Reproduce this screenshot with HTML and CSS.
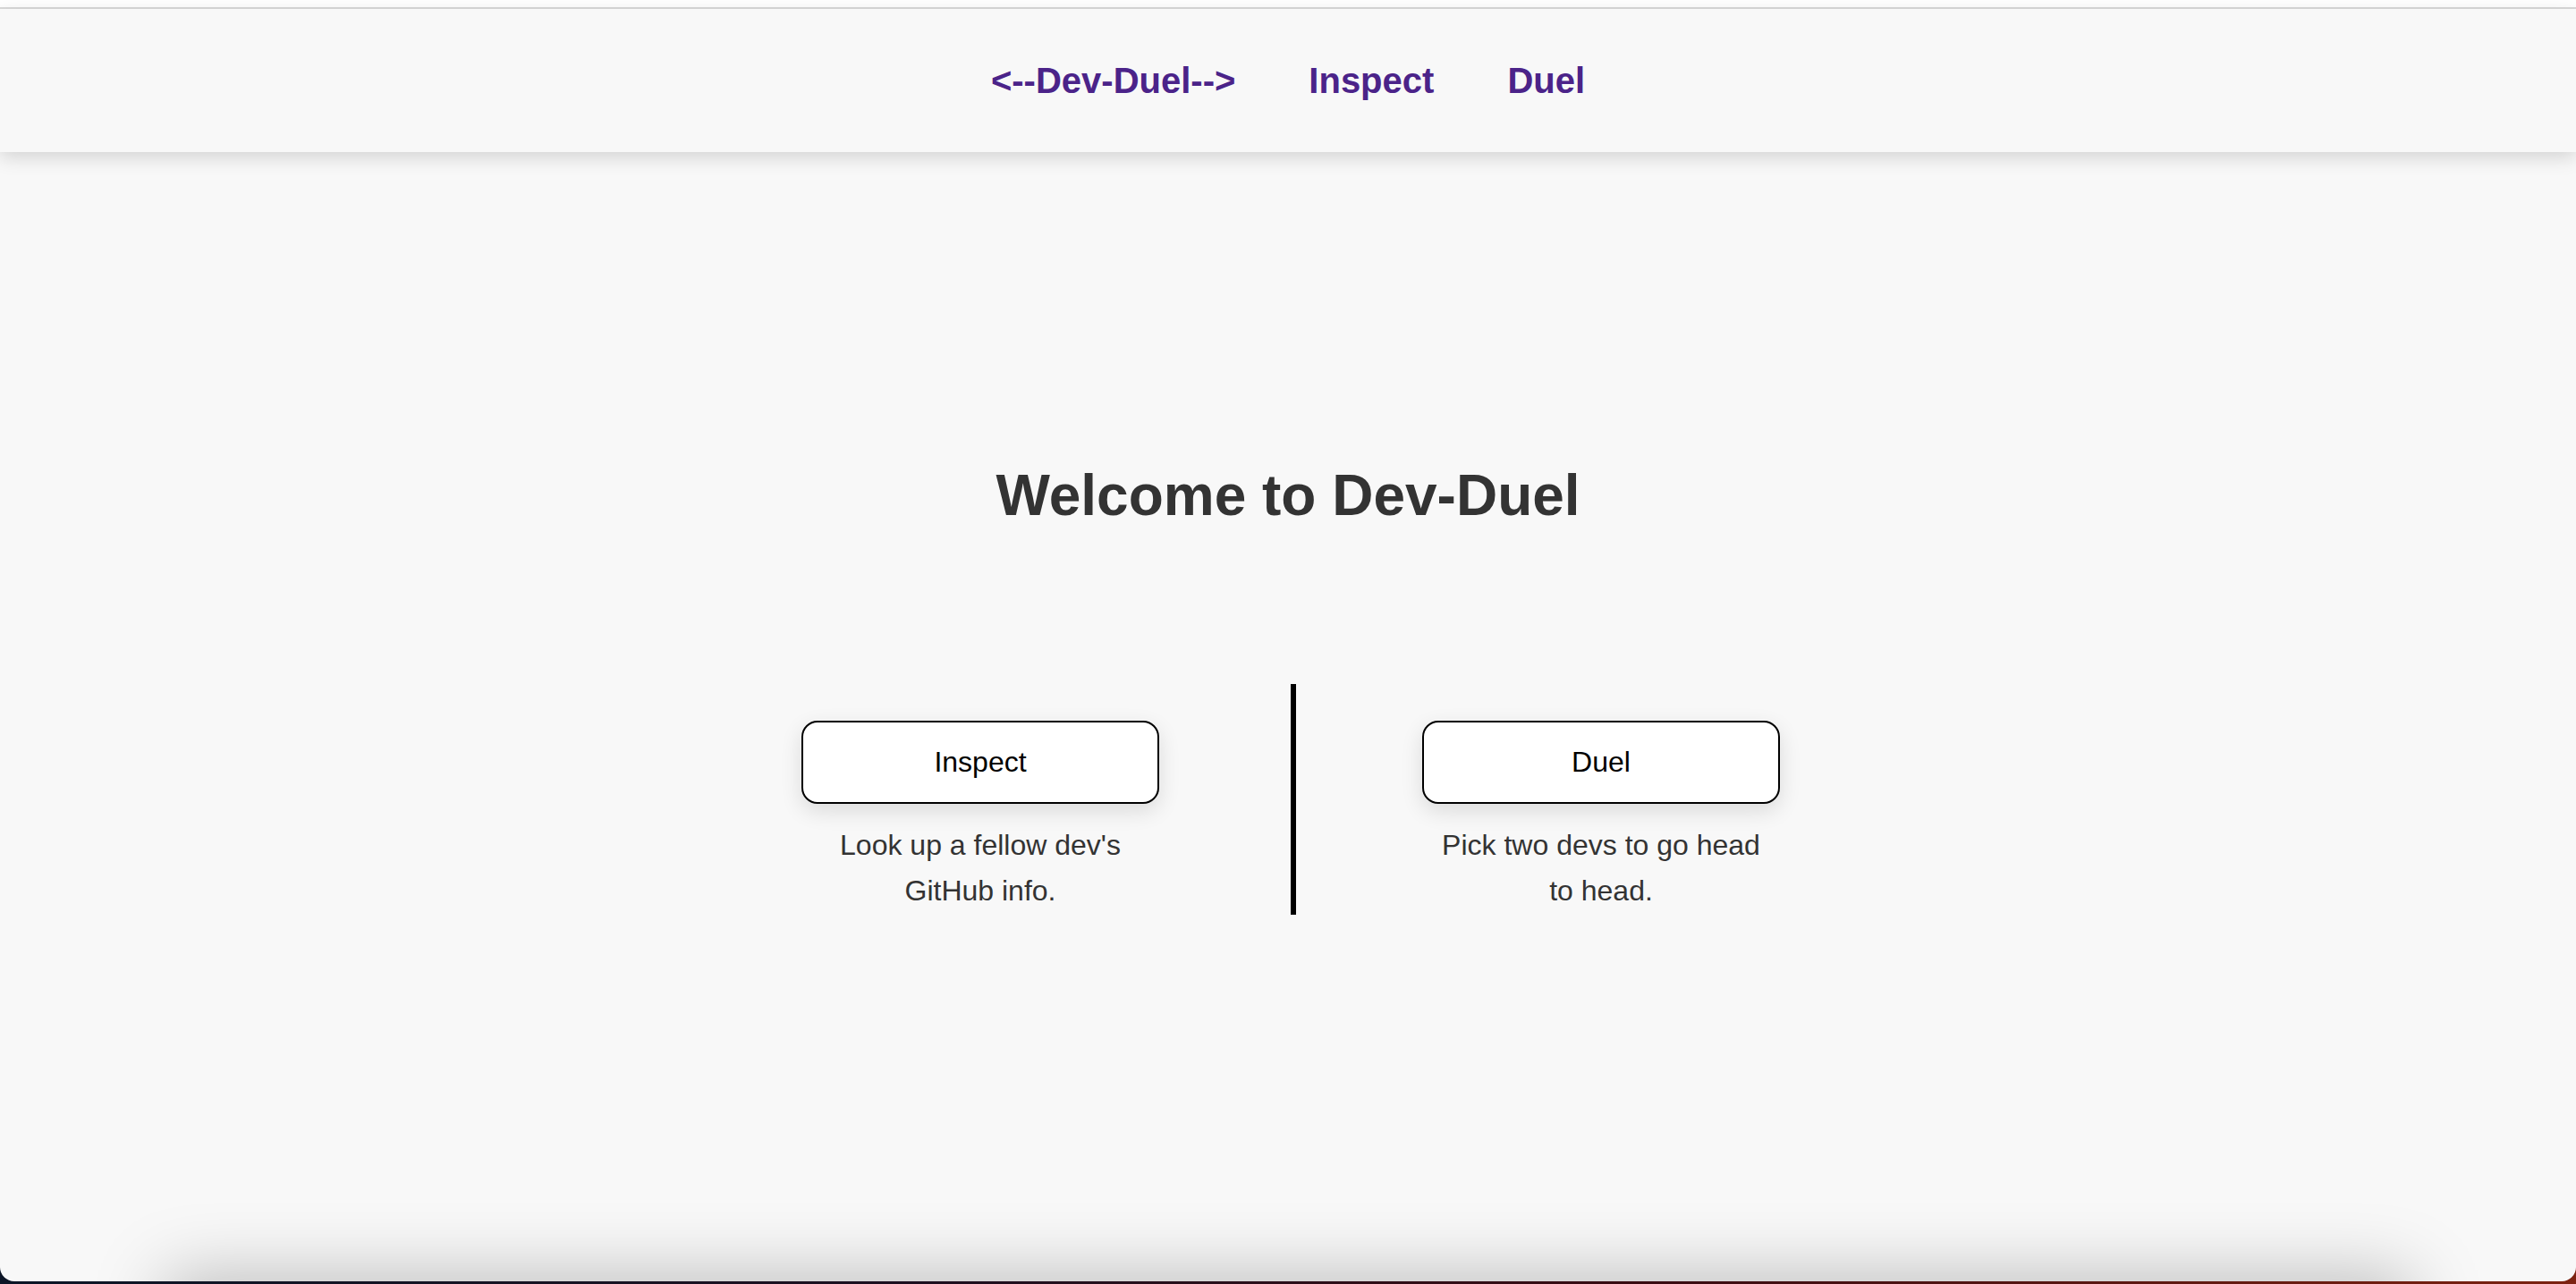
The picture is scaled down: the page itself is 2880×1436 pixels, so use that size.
FILE: index.html
```html
<!DOCTYPE html>
<html lang="en">
<head>
<meta charset="utf-8">
<title>Dev-Duel</title>
<link rel="stylesheet" href="styles.css">
</head>
<body>
  <div class="window">
    <div class="chrome"></div>
    <nav class="nav">
      <a class="nav-link" href="#">&lt;--Dev-Duel--&gt;</a>
      <a class="nav-link" href="#">Inspect</a>
      <a class="nav-link" href="#">Duel</a>
    </nav>
    <main class="main">
      <h1 class="title">Welcome to Dev-Duel</h1>
      <section class="choices">
        <div class="choice">
          <button class="btn" type="button">Inspect</button>
          <p class="desc">Look up a fellow dev's GitHub info.</p>
        </div>
        <div class="divider"></div>
        <div class="choice">
          <button class="btn" type="button">Duel</button>
          <p class="desc">Pick two devs to go head to head.</p>
        </div>
      </section>
    </main>
    <div class="footer-shadow"></div>
  </div>
</body>
</html>
```

FILE: styles.css
```css
html, body {
  margin: 0;
  padding: 0;
}

body {
  height: 1436px;
  overflow: hidden;
  background: linear-gradient(90deg, #0c1627 0%, #1c1020 35%, #3a0c12 65%, #7d2210 100%);
  font-family: "Liberation Sans", Arial, Helvetica, sans-serif;
}

.window {
  height: 1433px;
  background: #f8f8f8;
  border-radius: 0 0 16px 16px;
  overflow: hidden;
  display: flex;
  flex-direction: column;
}

.chrome {
  flex-shrink: 0;
  height: 8px;
  background: #ffffff;
  border-bottom: 2px solid #dadada;
}

.nav {
  flex-shrink: 0;
  height: 160px;
  display: flex;
  justify-content: center;
  align-items: center;
  gap: 82px;
  background: #f8f8f8;
  box-shadow: 0 6px 20px rgba(0, 0, 0, 0.15);
  position: relative;
  z-index: 1;
}

.nav-link {
  color: #4b2389;
  font-size: 40px;
  line-height: 46px;
  font-weight: bold;
  text-decoration: none;
}

.main {
  flex: 1;
  display: flex;
  flex-direction: column;
  align-items: center;
  padding-top: 348px;
}

.title {
  margin: 0;
  font-size: 64px;
  line-height: 72px;
  font-weight: bold;
  color: #333333;
}

.choices {
  margin-top: 175px;
  margin-left: 6px;
  display: flex;
  align-items: flex-start;
}

.choice {
  width: 400px;
  flex-shrink: 0;
  padding-top: 41px;
  display: flex;
  flex-direction: column;
  align-items: center;
}

.btn {
  width: 400px;
  height: 93px;
  box-sizing: border-box;
  border: 2px solid #000000;
  border-radius: 18px;
  background: #ffffff;
  box-shadow: 0 8px 24px rgba(0, 0, 0, 0.12);
  font-family: inherit;
  font-size: 32px;
  color: #000000;
  padding: 0;
}

.desc {
  margin: 21px 0 0;
  padding: 0 20px;
  font-size: 32px;
  line-height: 51.2px;
  color: #333333;
  text-align: center;
}

.divider {
  flex-shrink: 0;
  width: 6px;
  height: 258px;
  margin: 0 141px 0 147px;
  background: #000000;
}

.footer-shadow {
  flex-shrink: 0;
  height: 0;
  margin: 0 240px;
  box-shadow: 0 50px 80px 55px rgba(0, 0, 0, 0.25);
}
```
